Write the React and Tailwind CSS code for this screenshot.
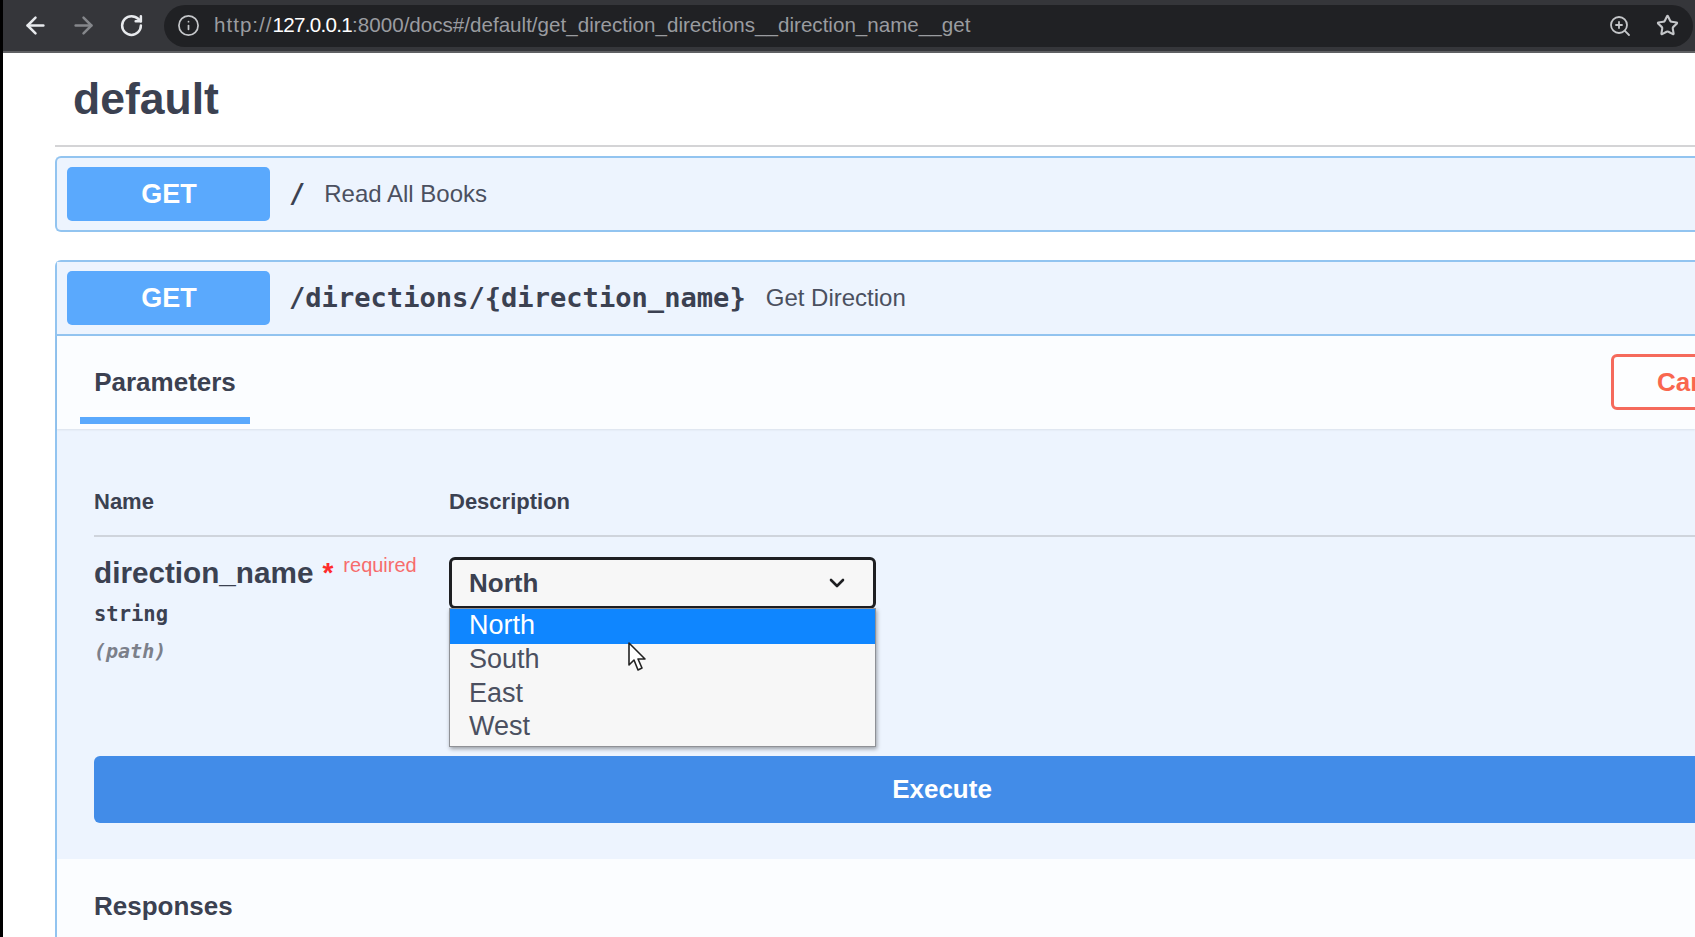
import { ArrowLeft, ArrowRight, RotateCw, Info, ZoomIn, Star, ChevronDown } from 'lucide-react';

const sans = "font-['Liberation_Sans',Arial,sans-serif]";
const mono = "font-['DejaVu_Sans_Mono','Liberation_Mono',monospace]";

const options = ['South', 'East', 'West'];

const GetBadge = () => (
  <div className="w-[203px] h-[54px] shrink-0 rounded-[5px] bg-[#5aa9fd] flex items-center justify-center text-white font-bold text-[27px] pl-[1px]">
    GET
  </div>
);

const App = () => {
  return (
    <div className={`${sans} flex h-[937px] overflow-hidden bg-white text-[#3b4151]`}>
      <div className="w-[3px] shrink-0 bg-black" />

      <div className="flex-1 min-w-0 flex flex-col">
        {/* Browser toolbar */}
        <div className="h-[53px] shrink-0 bg-[#35363a] border-b-2 border-[#5f6063] flex items-center pl-[19px] pr-[2px]">
          <ArrowLeft className="w-[27px] h-[27px] text-[#e8eaed] shrink-0" strokeWidth={2.2} />
          <ArrowRight className="w-[27px] h-[27px] text-[#85878b] shrink-0 ml-[21px]" strokeWidth={2.2} />
          <RotateCw className="w-[25px] h-[25px] text-[#e8eaed] shrink-0 ml-[22px]" strokeWidth={2.4} />
          <div className="ml-[20px] flex-1 h-[42px] rounded-full bg-[#202124] flex items-center pl-[13px] pr-[14px]">
            <Info className="w-[23px] h-[23px] text-[#c4c6c9] shrink-0" strokeWidth={1.8} />
            <span className="ml-[14px] text-[20.6px] text-[#9a9ca0] whitespace-nowrap">
              <span className="tracking-[1px]">http://</span>
              <span className="text-white tracking-[-0.7px]">127.0.0.1</span>:8000/docs#/default/get_direction_directions__direction_name__get
            </span>
            <ZoomIn className="w-[24px] h-[24px] text-[#c4c6c9] shrink-0 ml-auto" strokeWidth={1.8} />
            <Star className="w-[23px] h-[23px] text-[#c4c6c9] shrink-0 ml-[24px]" strokeWidth={2.2} />
          </div>
        </div>

        {/* Page */}
        <div className="flex-1 pl-[52px]">
          <div className="h-[92px] flex items-center ml-[18px]">
            <h3 className="text-[44.5px] font-bold text-[#3b4151] leading-none pt-[1px]">default</h3>
          </div>
          <div className="h-[2px] bg-[#d4d4d6]" />

          {/* Read All Books */}
          <div className="mt-[9px] h-[76px] border-2 border-r-0 border-[#92c4f0] rounded-l-[6px] bg-[#edf4fe] flex items-center pl-[10px]">
            <GetBadge />
            <span className={`${mono} ml-[19px] text-[27px] font-bold`}>/</span>
            <span className="ml-[19px] text-[24px] text-[#4b5060]">Read All Books</span>
          </div>

          {/* Get Direction */}
          <div className="mt-[28px] border-2 border-r-0 border-b-0 border-[#92c4f0] rounded-tl-[6px] h-[700px]">
            <div className="h-[74px] border-b-2 border-[#92c4f0] bg-[#edf4fe] flex items-center pl-[10px]">
              <GetBadge />
              <span className={`${mono} ml-[19px] text-[27.1px] font-bold whitespace-nowrap`}>/directions/{'{direction_name}'}</span>
              <span className="ml-[20px] text-[24px] text-[#4b5060]">Get Direction</span>
            </div>

            {/* Tabs */}
            <div className="h-[93px] bg-[#fbfdff] flex justify-between shadow-[0_1px_2px_rgba(0,0,0,0.08)] relative">
              <div className="ml-[23px] w-[170px] h-[88px] border-b-[7px] border-[#5aa9fd] flex items-center justify-center">
                <span className="font-bold text-[26px] pt-[12px]">Parameters</span>
              </div>
              <div className="mt-[18px] -mr-[60px] w-[144px] h-[56px] shrink-0 rounded-[6px] border-[3px] border-[#f56a5c] bg-[#fdfeff] flex items-center pl-[43px] text-[#f9674f] font-bold text-[26px]">
                Cancel
              </div>
            </div>

            {/* Parameters */}
            <div className="h-[430px] bg-[#edf4fe] pl-[37px] flex flex-col">
              <div className="h-[108px] border-b-2 border-[#cfd4dc] flex items-end pb-[17px] font-bold text-[22px]">
                <span className="w-[355px]">Name</span>
                <span>Description</span>
              </div>

              <div className="flex h-[219px]">
                <div className="w-[355px] pt-[18px]">
                  <div className="flex items-start whitespace-nowrap">
                    <span className="font-bold text-[29.7px] leading-[36px]">direction_name</span>
                    <span className="ml-[9px] text-[#ff2b2b] font-bold text-[28px] leading-[36px]">*</span>
                    <span className="ml-[10px] text-[20px] text-[#f76c6c] leading-[24px] mt-[-2px]">required</span>
                  </div>
                  <div className={`${mono} font-bold text-[20.5px] leading-none mt-[13px]`}>string</div>
                  <div className={`${mono} italic font-bold text-[20px] text-[#7c808a] leading-none mt-[16px]`}>(path)</div>
                </div>

                <div className="relative">
                  <div className="mt-[20px] w-[427px] h-[52px] rounded-[6px] border-[3px] border-[#1e1f22] bg-[#f7f7f7] flex items-center justify-between pl-[17px] pr-[24px] font-bold text-[26px]">
                    North
                    <ChevronDown className="w-[24px] h-[24px] text-[#1e1f22]" strokeWidth={2.6} />
                  </div>

                  {/* Open select list */}
                  <div className="absolute top-[71px] left-0 w-[427px] h-[139px] border border-[#8f9196] bg-[#f7f7f7] shadow-[1px_2px_4px_rgba(0,0,0,0.35)] text-[27px] leading-[33.5px] text-[#4b5060]">
                    <div className="h-[35px] bg-[#0f86ff] text-white pl-[19px]">North</div>
                    <div className="-mt-[1px]">
                      {options.map((option) => (
                        <div key={option} className="pl-[19px]">{option}</div>
                      ))}
                    </div>
                  </div>

                  {/* Mouse cursor */}
                  <svg className="absolute top-[104px] left-[178px]" width="20" height="32" viewBox="0 0 20 32">
                    <path d="M2 2 L2 24 L7 19 L11 29 L15 27 L11 18 L18 18 Z" fill="#fff" stroke="#222" strokeWidth="1.6" strokeLinejoin="round" />
                  </svg>
                </div>
              </div>

              <div className="w-[1696px] h-[67px] shrink-0 rounded-[6px] bg-[#428ce8] text-white font-bold text-[26px] flex items-center justify-center">
                Execute
              </div>
            </div>

            {/* Responses */}
            <div className="bg-[#fbfdff] h-[100px] pl-[37px] pt-[30px]">
              <h4 className="font-bold text-[26px] leading-[34px]">Responses</h4>
            </div>
          </div>
        </div>
      </div>
    </div>
  );
};

export default App;
